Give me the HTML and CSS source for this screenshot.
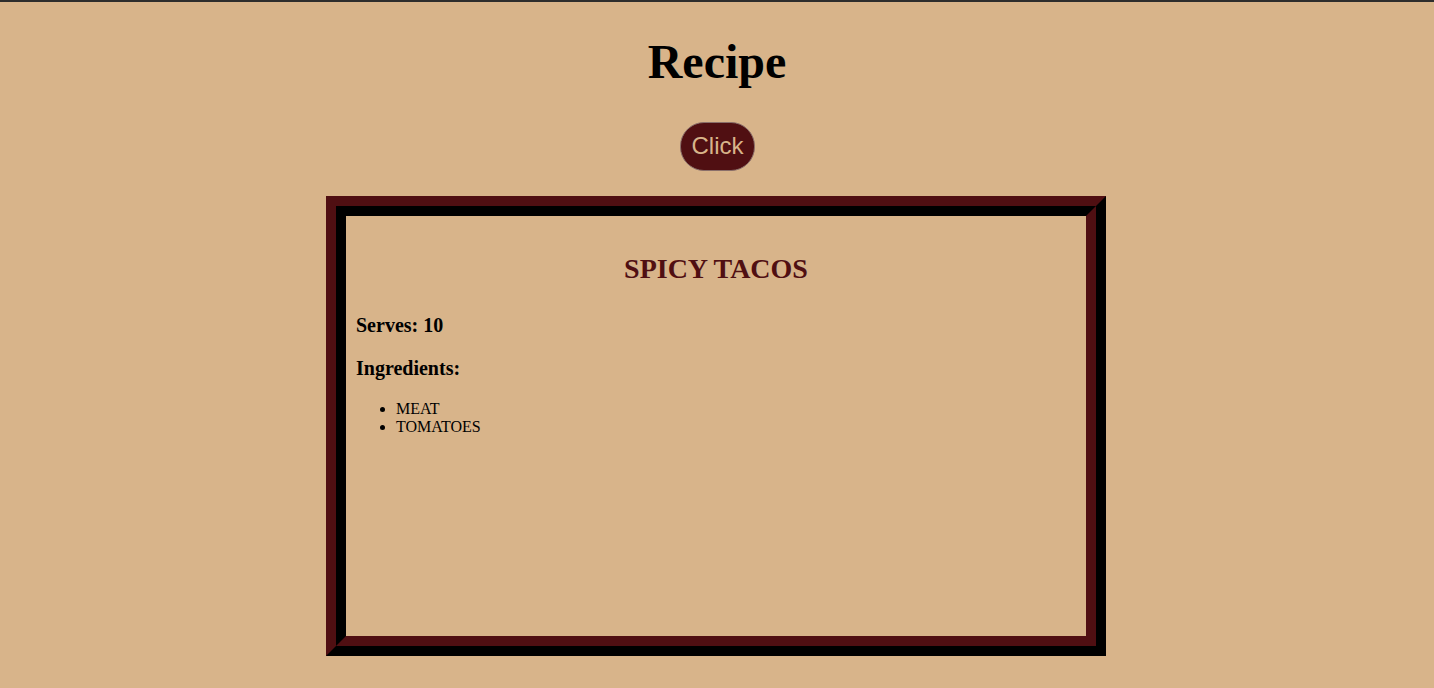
FILE: index.html
```html
<!DOCTYPE html>
<html>
<head>
<meta charset="utf-8">
<title>Recipe</title>
<link rel="stylesheet" href="styles.css">
</head>
<body>
<h1 class="title">Recipe</h1>
<div class="actions"><button class="btn">Click</button></div>
<div class="frame">
  <div class="card">
    <h2 class="dish">SPICY TACOS</h2>
    <h3 class="info">Serves: 10</h3>
    <h3 class="info">Ingredients:</h3>
    <ul class="list">
      <li>MEAT</li>
      <li>TOMATOES</li>
    </ul>
  </div>
</div>
</body>
</html>
```
FILE: styles.css
```css
html {
  background: #d8b48a;
  border-top: 2px solid #2d2d2d;
}
body {
  margin: 0;
  padding: 0;
  font-family: "Liberation Serif", "Times New Roman", serif;
  color: #000;
}
.title {
  margin: 32px 0 0;
  font-size: 48px;
  line-height: 55px;
  text-align: center;
  font-weight: bold;
}
.actions {
  display: flex;
  justify-content: center;
  margin-top: 33px;
}
.btn {
  font-family: "Liberation Sans", Arial, sans-serif;
  font-size: 24px;
  line-height: 28px;
  padding: 9px 10px 10px 11px;
  color: #d8b48a;
  background: #500f12;
  border: 1px solid #8a6f6a;
  border-radius: 24px;
  cursor: pointer;
}
.frame {
  width: 760px;
  margin: 25px 0 0 calc(50% - 391px);
  border: 10px solid;
  border-color: #500f12 #000 #000 #500f12;
}
.card {
  width: 720px;
  height: 400px;
  padding: 10px;
  border: 10px solid;
  border-color: #000 #500f12 #500f12 #000;
}
.dish {
  margin: 27px 0 0;
  font-size: 28px;
  line-height: 32px;
  text-align: center;
  color: #500f12;
}
.info {
  margin: 20px 0 0;
  font-size: 20px;
  line-height: 23px;
}
.dish + .info {
  margin-top: 29px;
}
.list {
  margin: 20px 0 0;
  padding-left: 40px;
  font-size: 16px;
  line-height: 18px;
}
```
